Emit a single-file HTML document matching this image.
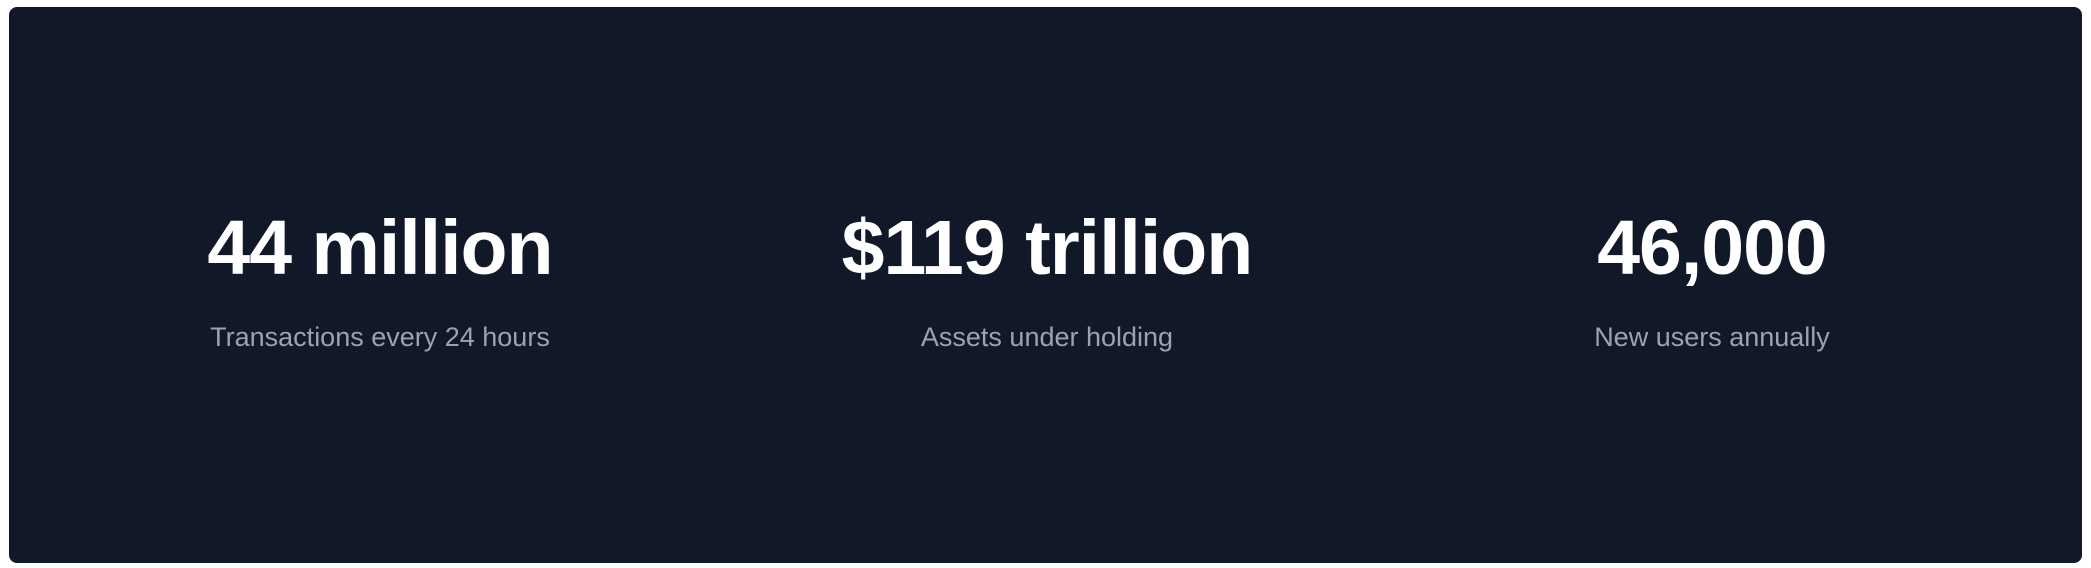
<!DOCTYPE html>
<html><head><style>
html,body{margin:0;padding:0;background:#fff;width:2091px;height:568px;overflow:hidden}
.card{position:absolute;left:9px;top:7px;width:2073px;height:556px;background:#111827;border-radius:8px}
.col{position:absolute;top:0;width:666px;text-align:center;font-family:"Liberation Sans",sans-serif}
.t{position:absolute;left:0;right:0;top:198px;font-size:77px;font-weight:bold;color:#fff;letter-spacing:-1px;line-height:100px}
.s{position:absolute;left:0;right:0;top:319px;font-size:27px;color:#9ca3af;line-height:36px}
</style></head><body>
<div class="card"></div>
<div class="col" style="left:47px"><div class="t">44 million</div><div class="s">Transactions every 24 hours</div></div>
<div class="col" style="left:714px"><div class="t">$119 trillion</div><div class="s">Assets under holding</div></div>
<div class="col" style="left:1379px"><div class="t">46,000</div><div class="s">New users annually</div></div>
</body></html>
